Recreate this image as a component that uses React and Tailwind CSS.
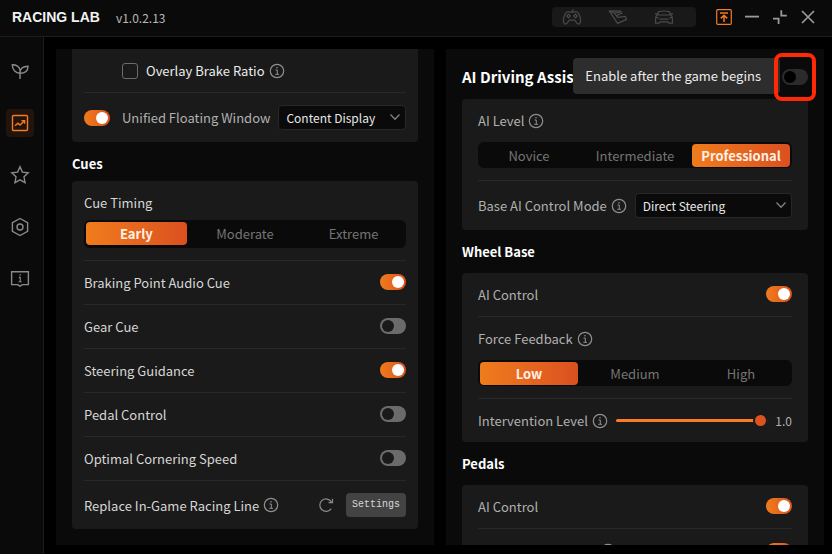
import { useState } from 'react'
import { clsx } from 'clsx'

function InfoIcon() {
  return (
    <svg viewBox="0 0 16 16" className="w-4 h-4 flex-shrink-0 text-[#8f8f8f]" fill="none" stroke="currentColor">
      <circle cx="8" cy="8" r="6.7" strokeWidth="1.2" />
      <path d="M6.5 7H8.3V11.2M6.3 11.3H10" strokeWidth="1" />
      <circle cx="8" cy="4.8" r="0.8" fill="currentColor" stroke="none" />
    </svg>
  )
}

function Toggle({ label, defaultChecked = false, dim = false }) {
  return (
    <input
      type="checkbox"
      role="switch"
      aria-label={label}
      defaultChecked={defaultChecked}
      className={clsx(
        'appearance-none w-[26px] h-4 p-[2px] rounded-full flex flex-shrink-0 cursor-pointer',
        'before:block before:w-3 before:h-3 before:rounded-full checked:before:ml-[10px] checked:before:bg-white',
        'checked:bg-linear-to-r checked:from-[#f07c1c] checked:to-[#dc521f]',
        dim ? 'bg-[#2b2b2b] before:bg-black' : 'bg-[#6b6b6b] before:bg-[#1a1a1a]'
      )}
    />
  )
}

function Segmented({ label, options, initial, className }) {
  const [active, setActive] = useState(initial)

  return (
    <div
      role="group"
      aria-label={label}
      className={clsx('grid grid-cols-3 gap-2 px-[2px] pt-[2px] rounded-md bg-[#0a0a0a]', className)}
    >
      {options.map((option) => (
        <button
          key={option}
          type="button"
          aria-pressed={active === option}
          onClick={() => setActive(option)}
          className={clsx(
            'rounded leading-5',
            active === option
              ? 'bg-linear-to-r from-[#f07c1c] to-[#da5020] text-[#fff0e6] font-bold'
              : 'text-[#757575]'
          )}
        >
          {option}
        </button>
      ))}
    </div>
  )
}

function Dropdown({ label, value, className }) {
  return (
    <div className={clsx('relative', className)}>
      <select
        aria-label={label}
        className="appearance-none block w-full h-[25px] pl-[7px] pr-6 rounded bg-[#0a0a0a] border border-[#272727] text-xs text-[#e8e8e8]"
      >
        <option>{value}</option>
      </select>
      <svg viewBox="0 0 12 12" className="absolute right-[5px] top-[6px] w-3 h-3 pointer-events-none" fill="none" stroke="#808080" strokeWidth="1.3">
        <path d="M1.5 3.5 6 8.2 10.5 3.5" />
      </svg>
    </div>
  )
}

function SwitchRow({ label, on }) {
  return (
    <div className="h-11 pb-px flex items-center justify-between border-b border-[#292929]">
      <span className="pt-[2px]">{label}</span>
      <Toggle label={label} defaultChecked={on} />
    </div>
  )
}

const navItems = [
  {
    name: 'Growth',
    icon: (
      <path d="M10 18V11.5C10 8 12.5 5.5 18 5.2 18 9.6 15.5 12.2 10 12.2M10 12.2C5.5 12 2.3 8.5 2.3 3.8 6.5 3.8 9.2 5.6 10 9" />
    )
  },
  {
    name: 'Telemetry',
    icon: (
      <>
        <rect x="2.5" y="2.5" width="15" height="15" rx="1" />
        <path d="M5 12.8 8 10.2 10 12 14.2 8M11.4 7.6H14.6V10.8" />
      </>
    )
  },
  {
    name: 'Favorites',
    icon: <path d="M10 1.8 12.4 7.1 18.2 7.8 14 11.8 15 17.6 10 14.8 5 17.6 6 11.8 1.8 7.8 7.6 7.1Z" />
  },
  {
    name: 'Settings',
    icon: (
      <>
        <path d="M10 1.5 17.6 5.6V14.4L10 18.5 2.4 14.4V5.6Z" />
        <circle cx="10" cy="10" r="3" />
      </>
    )
  },
  {
    name: 'About',
    icon: (
      <>
        <path d="M1.6 2.8H18.4V15.6H12.4L10 17.2 7.6 15.6H1.6Z" />
        <path d="M8.8 8.4H10.2V12.6M8.6 12.8H11.6M9.4 5.9H10.8" strokeWidth="1.1" />
      </>
    )
  }
]

function TitleBar() {
  return (
    <header className="flex items-center justify-between h-[37px] flex-shrink-0 pl-3 pr-4 pb-[2px] bg-[#0a0a0a] border-b border-[#1d1d1d]">
      <div className="flex items-center gap-4">
        <h1 className="font-['Liberation_Sans',sans-serif] font-bold text-sm text-[#f2f2f2]">RACING LAB</h1>
        <span className="text-xs text-[#b8b8b8] pt-[2px]">v1.0.2.13</span>
      </div>
      <div className="flex items-center">
        {/* Device status */}
        <div className="flex items-center gap-[26px] w-36 h-5 pl-[10px] mr-5 rounded bg-[#191919] text-[#4a4a4a]">
          <svg viewBox="0 0 20 18" className="w-5 h-[18px]" fill="none" stroke="currentColor" strokeWidth="1.2">
            <path d="M5 4C6.5 3.2 7.2 3.8 8 4.2H12C12.8 3.8 13.5 3.2 15 4 17.3 5.2 18.6 10 18.6 13 18.6 16.4 16.4 16.8 14.8 14.8L12.6 12.2H7.4L5.2 14.8C3.6 16.8 1.4 16.4 1.4 13 1.4 10 2.7 5.2 5 4ZM10 4.2C10 2.6 10.2 2.2 11.6 1.4" />
            <path d="M6.5 6.2 8.3 8 6.5 9.8 4.7 8ZM13.5 6.2 15.3 8 13.5 9.8 11.7 8Z" />
          </svg>
          <svg viewBox="0 0 20 18" className="w-5 h-[18px]" fill="none" stroke="currentColor" strokeWidth="1.2" strokeLinejoin="round">
            <path d="M1.2 2.8 12.4 3.2 14 5.2 8.4 7.6 9.6 9.4 17.4 8.4 18.6 11.4 9.6 15.4Z" />
            <path d="M1.4 3.4 6.4 5 12 4.4M6.4 5.4 8.4 7.6" />
          </svg>
          <svg viewBox="0 0 20 18" className="w-5 h-[18px]" fill="none" stroke="currentColor" strokeWidth="1.2">
            <path d="M3.2 7 4.8 3.6Q10 2.4 15.2 3.6L16.8 7ZM1 5.8H3.4M16.6 5.8H19M3.2 7Q1.4 8.2 1.6 11V15.2H5L5.8 13.8H14.2L15 15.2H18.4V11Q18.6 8.2 16.8 7M5.6 11.2H14.4M2 9.4 4.8 10M18 9.4 15.2 10" />
          </svg>
        </div>
        {/* Window controls */}
        <div className="flex items-center gap-3 text-[#9a9a9a]">
          <button type="button" aria-label="Pin to top" className="text-[#f47a24]">
            <svg viewBox="0 0 16 16" className="w-4 h-4" fill="none" stroke="currentColor" strokeWidth="1.2">
              <rect x="0.7" y="0.7" width="14.6" height="14.6" rx="1" />
              <path d="M4 3.9H12M8 13V6.6M4.8 9.4 8 6.3 11.2 9.4" strokeWidth="1.5" />
            </svg>
          </button>
          <button type="button" aria-label="Minimize">
            <svg viewBox="0 0 16 16" className="w-4 h-4" stroke="currentColor" strokeWidth="1.8">
              <path d="M1 7.6H15" />
            </svg>
          </button>
          <button type="button" aria-label="Restore">
            <svg viewBox="0 0 16 16" className="w-4 h-4" fill="none" stroke="currentColor" strokeWidth="1.8">
              <path d="M9.3 1.2V6.6H14.8M1 9.6H6.6V15" />
            </svg>
          </button>
          <button type="button" aria-label="Close">
            <svg viewBox="0 0 16 16" className="w-4 h-4" stroke="currentColor" strokeWidth="1.7">
              <path d="M2 2 14 14M14 2 2 14" />
            </svg>
          </button>
        </div>
      </div>
    </header>
  )
}

function Sidebar() {
  return (
    <nav className="flex flex-col gap-6 w-11 flex-shrink-0 pt-5 pl-[6px] bg-[#0a0a0a] border-r border-[#1d1d1d]">
      {navItems.map((item, i) => (
        <button
          key={item.name}
          type="button"
          aria-label={item.name}
          className={clsx(
            'flex items-center justify-center w-7 h-7 rounded',
            i === 1 ? 'bg-[#21140c] text-[#f47a24]' : 'text-[#8a8a8a]'
          )}
        >
          <svg viewBox="0 0 20 20" className="w-5 h-5" fill="none" stroke="currentColor" strokeWidth="1.4">
            {item.icon}
          </svg>
        </button>
      ))}
    </nav>
  )
}

function CuesPanel() {
  return (
    <section className="px-4 bg-[#0a0a0a] overflow-hidden text-[#d6d6d6]">
      <div className="px-3 rounded-b bg-[#1a1a1a]">
        <div className="h-11 flex items-center border-b border-[#292929] pl-[38px]">
          <label className="flex items-center gap-2 mr-1 text-[#ececec]">
            <input type="checkbox" className="appearance-none w-4 h-4 rounded-[3px] border border-[#6b6b6b]" />
            Overlay Brake Ratio
          </label>
          <InfoIcon />
        </div>
        <div className="h-[49px] flex items-center">
          <Toggle label="Unified Floating Window" defaultChecked />
          <span className="ml-3 mr-2 whitespace-nowrap text-[#b0b0b0]">Unified Floating Window</span>
          <Dropdown label="Floating window content" value="Content Display" className="flex-1" />
        </div>
      </div>

      <h2 className="h-[39px] pt-1 flex items-center font-bold text-white">Cues</h2>

      <div className="px-3 rounded bg-[#1a1a1a]">
        <div className="pt-[10px] pb-3 border-b border-[#292929]">
          <div className="h-6 leading-6 mb-[5px]">Cue Timing</div>
          <Segmented label="Cue Timing" options={['Early', 'Moderate', 'Extreme']} initial="Early" className="h-7 pb-[3px]" />
        </div>
        <SwitchRow label="Braking Point Audio Cue" on />
        <SwitchRow label="Gear Cue" />
        <SwitchRow label="Steering Guidance" on />
        <SwitchRow label="Pedal Control" />
        <SwitchRow label="Optimal Cornering Speed" />
        <div className="h-12 flex items-center gap-1">
          <span className="pt-[2px]">Replace In-Game Racing Line</span>
          <InfoIcon />
          <button type="button" aria-label="Reset" className="ml-auto mr-2 text-[#8a8a8a]">
            <svg viewBox="0 0 16 16" className="w-4 h-4" fill="none" stroke="currentColor" strokeWidth="1.2">
              <path d="M13.2 11.6A6.2 6.2 0 1 1 13.4 5M14.5 1.8V5.6H10.6" />
            </svg>
          </button>
          <button
            type="button"
            className="w-[60px] h-6 rounded bg-[#434343] text-[#d8d8d8] text-[10px] font-['Liberation_Mono',monospace]"
          >
            Settings
          </button>
        </div>
      </div>
    </section>
  )
}

function AssistPanel() {
  return (
    <section className="px-4 bg-[#0a0a0a] overflow-hidden text-[#b0b0b0]">
      <div className="relative h-[50px] pt-[6px] flex items-center justify-between">
        <h2 className="font-bold text-[15px] text-white">AI Driving Assistant</h2>
        <div role="tooltip" className="absolute right-7 top-[9px] h-9 pl-3 pr-[19px] flex items-center rounded bg-[#2d2d2d] text-[#ececec] whitespace-nowrap">
          Enable after the game begins
        </div>
        <div className="relative">
          <Toggle label="AI Driving Assistant" dim />
          <div className="absolute -inset-x-2 -inset-y-4 rounded-lg border-4 border-[#ff2a05] pointer-events-none" />
        </div>
      </div>

      <div className="px-4 rounded bg-[#1a1a1a]">
        <div className="pt-[10px] pb-3 border-b border-[#292929]">
          <div className="h-6 mb-[9px] flex items-center gap-1">
            <span>AI Level</span>
            <InfoIcon />
          </div>
          <Segmented label="AI Level" options={['Novice', 'Intermediate', 'Professional']} initial="Professional" className="h-[26px] pb-px" />
        </div>
        <div className="h-[49px] flex items-center gap-1">
          <span className="whitespace-nowrap">Base AI Control Mode</span>
          <InfoIcon />
          <Dropdown label="Base AI Control Mode" value="Direct Steering" className="flex-1 ml-1" />
        </div>
      </div>

      <h3 className="h-[43px] flex items-center font-bold text-white">Wheel Base</h3>

      <div className="px-4 rounded bg-[#1a1a1a]">
        <SwitchRow label="AI Control" on />
        <div className="pt-[10px] pb-3 border-b border-[#292929]">
          <div className="h-6 mb-[9px] flex items-center gap-1">
            <span>Force Feedback</span>
            <InfoIcon />
          </div>
          <Segmented label="Force Feedback" options={['Low', 'Medium', 'High']} initial="Low" className="h-[26px] pb-px" />
        </div>
        <div className="h-[43px] flex items-center gap-1">
          <label htmlFor="intervention" className="whitespace-nowrap">Intervention Level</label>
          <InfoIcon />
          <input
            id="intervention"
            type="range"
            min="0"
            max="1"
            step="0.1"
            defaultValue="1"
            className="appearance-none flex-1 min-w-0 ml-1 h-4 bg-transparent [&::-webkit-slider-runnable-track]:h-[3px] [&::-webkit-slider-runnable-track]:rounded-full [&::-webkit-slider-runnable-track]:bg-[#fb7a26] [&::-webkit-slider-thumb]:appearance-none [&::-webkit-slider-thumb]:w-[15px] [&::-webkit-slider-thumb]:h-[15px] [&::-webkit-slider-thumb]:-mt-[6px] [&::-webkit-slider-thumb]:rounded-full [&::-webkit-slider-thumb]:border-2 [&::-webkit-slider-thumb]:border-[#1a1a1a] [&::-webkit-slider-thumb]:bg-[#dc5320]"
          />
          <span className="w-5 text-right text-xs">1.0</span>
        </div>
      </div>

      <h3 className="h-[43px] flex items-center font-bold text-white">Pedals</h3>

      <div className="px-4 rounded bg-[#1a1a1a]">
        <SwitchRow label="AI Control" on />
        {/* Cut off by the bottom edge of the panel */}
        <div className="h-11 flex items-center justify-between">
          <div className="pl-[122px]">
            <InfoIcon />
          </div>
          <Toggle label="Pedal assist" defaultChecked />
        </div>
      </div>
    </section>
  )
}

function App() {
  return (
    <div className="h-screen flex flex-col overflow-hidden bg-black text-[13px] leading-5 font-['Noto_Sans_CJK_SC',sans-serif]">
      <TitleBar />
      <div className="flex flex-1 min-h-0">
        <Sidebar />
        <main className="flex-1 min-w-0 grid grid-cols-2 grid-rows-1 gap-3 pt-3 pl-3 pr-2 pb-[9px]">
          <CuesPanel />
          <AssistPanel />
        </main>
      </div>
    </div>
  )
}

export default App
